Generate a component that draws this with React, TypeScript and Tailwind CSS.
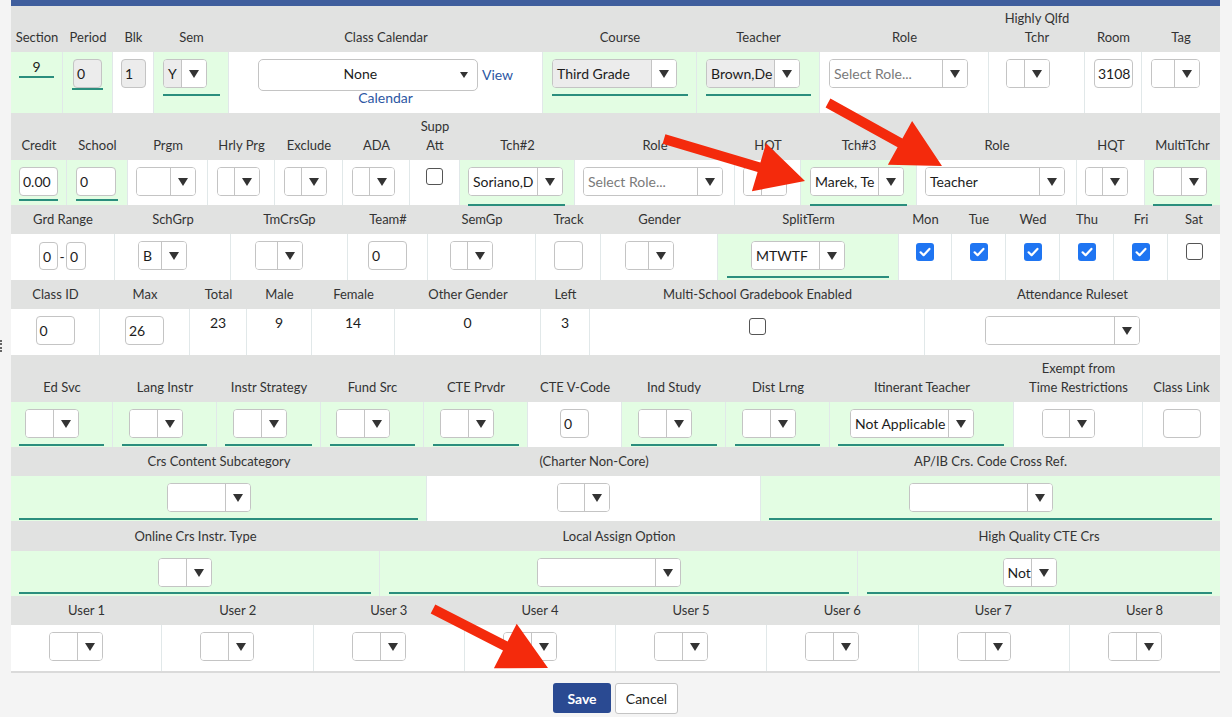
import React from "react";

const GREEN = "bg-[#e3fde3]";
const UL = "border-b-2 border-[#2b8e7d]";

function Tri({ small }: { small?: boolean }) {
  return small ? (
    <svg width="8" height="6" viewBox="0 0 8 6">
      <polygon points="0,0 8,0 4,6" fill="#333" />
    </svg>
  ) : (
    <svg width="10" height="8" viewBox="0 0 10 8">
      <polygon points="0,0 10,0 5,8" fill="#333" />
    </svg>
  );
}

type SelProps = { w: string; text?: string; ph?: boolean; gray?: boolean };
function Sel({ w, text = "", ph, gray }: SelProps) {
  return (
    <div className={`${w} flex h-[29px] shrink-0 overflow-hidden rounded-[4px] border border-[#c4c4c4] bg-white`}>
      <div
        className={`flex min-w-0 flex-1 items-center overflow-hidden whitespace-nowrap pb-[1px] pl-[4px] text-[14px] ${
          gray ? "bg-[#ececec]" : "bg-white"
        } ${ph ? "text-[#7a7a7a]" : "text-[#1c1c1c]"}`}
      >
        {text}
      </div>
      <div className="flex w-[25px] shrink-0 items-center justify-center border-l border-[#c4c4c4] bg-white">
        <Tri />
      </div>
    </div>
  );
}

function Inp({ w, v = "", gray }: { w: string; v?: string; gray?: boolean }) {
  return (
    <div
      className={`${w} flex h-[29px] shrink-0 items-center overflow-hidden rounded-[4px] border border-[#c4c4c4] pb-[1px] pl-[3px] text-[14px] text-[#1c1c1c] ${
        gray ? "bg-[#ececec]" : "bg-white"
      }`}
    >
      {v}
    </div>
  );
}

function Cb({ on }: { on?: boolean }) {
  return on ? (
    <div className="flex h-[18px] w-[18px] items-center justify-center rounded-[3px] bg-[#1f75f2]">
      <svg width="12" height="10" viewBox="0 0 12 10">
        <path d="M1.6 5.3 L4.6 8.2 L10.4 1.9" stroke="white" strokeWidth="2.2" fill="none" strokeLinecap="round" strokeLinejoin="round" />
      </svg>
    </div>
  ) : (
    <div className="h-[17px] w-[17px] rounded-[3px] border border-[#555] bg-white" />
  );
}

function C({
  w,
  g,
  last,
  className = "",
  children,
}: {
  w: string;
  g?: boolean;
  last?: boolean;
  className?: string;
  children?: React.ReactNode;
}) {
  return (
    <div className={`${w} shrink-0 ${g ? GREEN : "bg-white"} ${last ? "" : "border-r border-[#e1e8e9]"} ${className}`}>
      {children}
    </div>
  );
}

function HRow({ h, cols }: { h: string; cols: [string, React.ReactNode][] }) {
  return (
    <div className={`flex ${h} bg-[#e1e2e1]`}>
      {cols.map(([w, label], i) => (
        <div
          key={i}
          className={`${w} flex shrink-0 items-end justify-center pb-[5px] text-center text-[13px] leading-[19px] text-[#333]`}
        >
          {label}
        </div>
      ))}
    </div>
  );
}

const Sp = () => <div className="w-[20px] shrink-0" />;

function arrowPts(x1: number, y1: number, x2: number, y2: number, s = 10, W = 50, L = 48) {
  const dx = x2 - x1;
  const dy = y2 - y1;
  const len = Math.hypot(dx, dy);
  const ux = dx / len;
  const uy = dy / len;
  const nx = -uy;
  const ny = ux;
  const bx = x2 - ux * L;
  const by = y2 - uy * L;
  const p = [
    [x1 + (nx * s) / 2, y1 + (ny * s) / 2],
    [bx + (nx * s) / 2, by + (ny * s) / 2],
    [bx + (nx * W) / 2, by + (ny * W) / 2],
    [x2, y2],
    [bx - (nx * W) / 2, by - (ny * W) / 2],
    [bx - (nx * s) / 2, by - (ny * s) / 2],
    [x1 - (nx * s) / 2, y1 - (ny * s) / 2],
  ];
  return p.map((q) => q.map((n) => n.toFixed(1)).join(",")).join(" ");
}

export default function App() {
  return (
    <div className="relative min-h-screen w-full overflow-hidden bg-[#f4f4f4] font-[Lato,sans-serif] text-[#1c1c1c]">
      <div className="ml-[11px] w-[1209px]">
        <div className="h-[6px] bg-[#3f5e9d]" />

        {/* Row 1 */}
        <HRow
          h="h-[46px]"
          cols={[
            ["w-[52px]", "Section"],
            ["w-[50px]", "Period"],
            ["w-[41px]", "Blk"],
            ["w-[75px]", "Sem"],
            ["w-[314px]", "Class Calendar"],
            ["w-[154px]", "Course"],
            ["w-[123px]", "Teacher"],
            ["w-[169px]", "Role"],
            [
              "w-[96px]",
              <span>
                Highly Qlfd
                <br />
                Tchr
              </span>,
            ],
            ["w-[57px]", "Room"],
            ["w-[78px]", "Tag"],
          ]}
        />
        <div className="flex h-[61px]">
          <C w="w-[52px]" g>
            <div className={`mx-[8px] mt-[6px] ${UL} text-center text-[14px] leading-[18px]`}>9</div>
          </C>
          <C w="w-[50px]" g className="pt-[7px]">
            <div className={`mx-[9px] ${UL}`}>
              <div className="ml-[1px]">
                <Inp w="w-[29px]" v="0" gray />
              </div>
            </div>
          </C>
          <C w="w-[41px]" className="pl-[8px] pt-[7px]">
            <Inp w="w-[25px]" v="1" gray />
          </C>
          <C w="w-[75px]" g className="pt-[7px]">
            <div className={`ml-[9px] mr-[8px] ${UL} pb-[6px]`}>
              <Sel w="w-[44px]" text="Y" gray />
            </div>
          </C>
          <C w="w-[314px]" className="flex flex-col items-center pt-[7px]">
            <div className="flex items-center gap-[4px]">
              <div className="flex h-[32px] w-[220px] items-center rounded-[5px] border border-[#c4c4c4] bg-white pb-[3px]">
                <div className="flex-1 pl-[2px] text-center text-[14px]">None</div>
                <div className="flex pr-[9px] pt-[2px]">
                  <Tri small />
                </div>
              </div>
              <span className="pb-[2px] text-[14px] text-[#2c57a3]">View</span>
            </div>
            <span className="-mt-[1px] text-[14px] leading-[16px] text-[#2c57a3]">Calendar</span>
          </C>
          <C w="w-[154px]" g className="pt-[7px]">
            <div className={`ml-[9px] mr-[8px] ${UL} pb-[6px]`}>
              <Sel w="w-[125px]" text="Third Grade" gray />
            </div>
          </C>
          <C w="w-[123px]" g className="pt-[7px]">
            <div className={`ml-[9px] mr-[8px] ${UL} pb-[6px]`}>
              <Sel w="w-[94px]" text="Brown,De" gray />
            </div>
          </C>
          <C w="w-[169px]" className="pl-[9px] pt-[7px]">
            <Sel w="w-[139px]" text="Select Role..." ph />
          </C>
          <C w="w-[96px]" className="pl-[17px] pt-[7px]">
            <Sel w="w-[44px]" />
          </C>
          <C w="w-[57px]" className="pl-[9px] pt-[7px]">
            <Inp w="w-[39px]" v="3108" />
          </C>
          <C w="w-[78px]" last className="pl-[9px] pt-[7px]">
            <Sel w="w-[49px]" />
          </C>
        </div>

        {/* Row 2 */}
        <HRow
          h="h-[47px]"
          cols={[
            ["w-[56px]", "Credit"],
            ["w-[61px]", "School"],
            ["w-[80px]", "Prgm"],
            ["w-[67px]", "Hrly Prg"],
            ["w-[68px]", "Exclude"],
            ["w-[67px]", "ADA"],
            [
              "w-[50px]",
              <span>
                Supp
                <br />
                Att
              </span>,
            ],
            ["w-[115px]", "Tch#2"],
            ["w-[160px]", "Role"],
            ["w-[66px]", "HQT"],
            ["w-[116px]", "Tch#3"],
            ["w-[160px]", "Role"],
            ["w-[68px]", "HQT"],
            ["w-[75px]", "MultiTchr"],
          ]}
        />
        <div className="flex h-[45px]">
          <C w="w-[56px]" g className="pt-[7px]">
            <div className={`mx-[8px] ${UL} pb-[3px]`}>
              <Inp w="w-[39px]" v="0.00" />
            </div>
          </C>
          <C w="w-[61px]" g className="pt-[7px]">
            <div className={`ml-[9px] mr-[9px] ${UL} pb-[3px]`}>
              <Inp w="w-[40px]" v="0" />
            </div>
          </C>
          <C w="w-[80px]" className="pl-[8px] pt-[7px]">
            <Sel w="w-[60px]" />
          </C>
          <C w="w-[67px]" className="pl-[9px] pt-[7px]">
            <Sel w="w-[43px]" />
          </C>
          <C w="w-[68px]" className="pl-[9px] pt-[7px]">
            <Sel w="w-[43px]" />
          </C>
          <C w="w-[67px]" className="pl-[9px] pt-[7px]">
            <Sel w="w-[43px]" />
          </C>
          <C w="w-[50px]" className="pl-[16px] pt-[8px]">
            <Cb />
          </C>
          <C w="w-[115px]" g className="pt-[7px]">
            <div className={`ml-[8px] mr-[9px] ${UL} pb-[8px]`}>
              <Sel w="w-[95px]" text="Soriano,D" />
            </div>
          </C>
          <C w="w-[160px]" className="pl-[8px] pt-[7px]">
            <Sel w="w-[140px]" text="Select Role..." ph />
          </C>
          <C w="w-[66px]" className="pl-[8px] pt-[7px]">
            <Sel w="w-[44px]" />
          </C>
          <C w="w-[116px]" g className="pt-[7px]">
            <div className={`mx-[9px] ${UL} pb-[8px]`}>
              <Sel w="w-[94px]" text="Marek, Te" />
            </div>
          </C>
          <C w="w-[160px]" className="pl-[8px] pt-[7px]">
            <Sel w="w-[140px]" text="Teacher" />
          </C>
          <C w="w-[68px]" className="pl-[8px] pt-[7px]">
            <Sel w="w-[43px]" />
          </C>
          <C w="w-[75px]" g last className="pt-[7px]">
            <div className={`mx-[8px] ${UL} pb-[8px]`}>
              <Sel w="w-[54px]" />
            </div>
          </C>
        </div>

        {/* Row 3 */}
        <HRow
          h="h-[29px]"
          cols={[
            ["w-[104px]", "Grd Range"],
            ["w-[116px]", "SchGrp"],
            ["w-[117px]", "TmCrsGp"],
            ["w-[80px]", "Team#"],
            ["w-[108px]", "SemGp"],
            ["w-[65px]", "Track"],
            ["w-[117px]", "Gender"],
            ["w-[181px]", "SplitTerm"],
            ["w-[53px]", "Mon"],
            ["w-[54px]", "Tue"],
            ["w-[54px]", "Wed"],
            ["w-[54px]", "Thu"],
            ["w-[54px]", "Fri"],
            ["w-[52px]", "Sat"],
          ]}
        />
        <div className="flex h-[46px]">
          <C w="w-[104px]" className="flex justify-center pt-[8px]">
            <div className="flex h-[28px] items-center">
              <div className="flex h-[28px] w-[19px] items-center rounded-[4px] border border-[#c4c4c4] pl-[3px] text-[14px]">0</div>
              <span className="w-[8px] text-center text-[14px]">-</span>
              <div className="flex h-[28px] w-[20px] items-center rounded-[4px] border border-[#c4c4c4] pl-[3px] text-[14px]">0</div>
            </div>
          </C>
          <C w="w-[116px]" className="flex justify-center pt-[7px]">
            <Sel w="w-[49px]" text="B" />
            <Sp />
          </C>
          <C w="w-[117px]" className="flex justify-center pt-[7px]">
            <Sel w="w-[48px]" />
            <Sp />
          </C>
          <C w="w-[80px]" className="flex justify-center pt-[7px]">
            <Inp w="w-[39px]" v="0" />
          </C>
          <C w="w-[108px]" className="flex justify-center pt-[7px]">
            <Sel w="w-[43px]" />
            <Sp />
          </C>
          <C w="w-[65px]" className="flex justify-center pt-[7px]">
            <Inp w="w-[29px]" />
          </C>
          <C w="w-[117px]" className="flex justify-center pt-[7px]">
            <Sel w="w-[49px]" />
            <Sp />
          </C>
          <C w="w-[181px]" g className="pt-[7px]">
            <div className={`mx-[9px] flex justify-center ${UL} pb-[6px]`}>
              <Sel w="w-[94px]" text="MTWTF" />
              <Sp />
            </div>
          </C>
          <C w="w-[53px]" className="flex justify-center pt-[9px]">
            <Cb on />
          </C>
          <C w="w-[54px]" className="flex justify-center pt-[9px]">
            <Cb on />
          </C>
          <C w="w-[54px]" className="flex justify-center pt-[9px]">
            <Cb on />
          </C>
          <C w="w-[54px]" className="flex justify-center pt-[9px]">
            <Cb on />
          </C>
          <C w="w-[54px]" className="flex justify-center pt-[9px]">
            <Cb on />
          </C>
          <C w="w-[52px]" last className="flex justify-center pt-[9px]">
            <Cb />
          </C>
        </div>

        {/* Row 4 */}
        <HRow
          h="h-[29px]"
          cols={[
            ["w-[89px]", "Class ID"],
            ["w-[90px]", "Max"],
            ["w-[57px]", "Total"],
            ["w-[65px]", "Male"],
            ["w-[83px]", "Female"],
            ["w-[146px]", "Other Gender"],
            ["w-[49px]", "Left"],
            ["w-[335px]", "Multi-School Gradebook Enabled"],
            ["w-[295px]", "Attendance Ruleset"],
          ]}
        />
        <div className="flex h-[46px]">
          <C w="w-[89px]" className="flex justify-center pt-[7px]">
            <Inp w="w-[39px]" v="0" />
          </C>
          <C w="w-[90px]" className="flex justify-center pt-[7px]">
            <Inp w="w-[39px]" v="26" />
          </C>
          <C w="w-[57px]" className="pt-[5px] text-center text-[14px] leading-[18px]">
            23
          </C>
          <C w="w-[65px]" className="pt-[5px] text-center text-[14px] leading-[18px]">
            9
          </C>
          <C w="w-[83px]" className="pt-[5px] text-center text-[14px] leading-[18px]">
            14
          </C>
          <C w="w-[146px]" className="pt-[5px] text-center text-[14px] leading-[18px]">
            0
          </C>
          <C w="w-[49px]" className="pt-[5px] text-center text-[14px] leading-[18px]">
            3
          </C>
          <C w="w-[335px]" className="flex justify-center pt-[9px]">
            <Cb />
          </C>
          <C w="w-[295px]" last className="flex justify-center pt-[7px]">
            <Sel w="w-[155px]" />
            <Sp />
          </C>
        </div>

        {/* Row 5 */}
        <HRow
          h="h-[47px]"
          cols={[
            ["w-[102px]", "Ed Svc"],
            ["w-[104px]", "Lang Instr"],
            ["w-[104px]", "Instr Strategy"],
            ["w-[103px]", "Fund Src"],
            ["w-[104px]", "CTE Prvdr"],
            ["w-[94px]", "CTE V-Code"],
            ["w-[104px]", "Ind Study"],
            ["w-[104px]", "Dist Lrng"],
            ["w-[184px]", "Itinerant Teacher"],
            [
              "w-[129px]",
              <span>
                Exempt from
                <br />
                Time Restrictions
              </span>,
            ],
            ["w-[77px]", "Class Link"],
          ]}
        />
        <div className="flex h-[45px]">
          <C w="w-[102px]" g className="pt-[7px]">
            <div className={`mx-[8px] ${UL} pb-[6px] pl-[6px]`}>
              <Sel w="w-[54px]" />
            </div>
          </C>
          <C w="w-[104px]" g className="pt-[7px]">
            <div className={`mx-[9px] ${UL} pb-[6px] pl-[7px]`}>
              <Sel w="w-[54px]" />
            </div>
          </C>
          <C w="w-[104px]" g className="pt-[7px]">
            <div className={`mx-[8px] ${UL} pb-[6px] pl-[8px]`}>
              <Sel w="w-[54px]" />
            </div>
          </C>
          <C w="w-[103px]" g className="pt-[7px]">
            <div className={`ml-[9px] mr-[8px] ${UL} pb-[6px] pl-[6px]`}>
              <Sel w="w-[54px]" />
            </div>
          </C>
          <C w="w-[104px]" g className="pt-[7px]">
            <div className={`ml-[9px] mr-[8px] ${UL} pb-[6px] pl-[7px]`}>
              <Sel w="w-[54px]" />
            </div>
          </C>
          <C w="w-[94px]" className="flex justify-center pt-[7px]">
            <Inp w="w-[29px]" v="0" />
          </C>
          <C w="w-[104px]" g className="pt-[7px]">
            <div className={`ml-[9px] mr-[8px] ${UL} pb-[6px] pl-[7px]`}>
              <Sel w="w-[54px]" />
            </div>
          </C>
          <C w="w-[104px]" g className="pt-[7px]">
            <div className={`mx-[9px] ${UL} pb-[6px] pl-[7px]`}>
              <Sel w="w-[54px]" />
            </div>
          </C>
          <C w="w-[184px]" g className="pt-[7px]">
            <div className={`ml-[8px] mr-[9px] ${UL} pb-[6px] pl-[12px]`}>
              <Sel w="w-[124px]" text="Not Applicable" />
            </div>
          </C>
          <C w="w-[129px]" className="flex justify-center pt-[7px]">
            <Sel w="w-[53px]" />
            <Sp />
          </C>
          <C w="w-[77px]" last className="flex justify-center pt-[7px]">
            <Inp w="w-[38px]" />
          </C>
        </div>

        {/* Row 6 */}
        <HRow
          h="h-[29px]"
          cols={[
            ["w-[416px]", "Crs Content Subcategory"],
            ["w-[334px]", "(Charter Non-Core)"],
            ["w-[459px]", "AP/IB Crs. Code Cross Ref."],
          ]}
        />
        <div className="flex h-[45px]">
          <C w="w-[416px]" g className="pt-[7px]">
            <div className={`mx-[8px] flex justify-center ${UL} pb-[6px]`}>
              <Sel w="w-[84px]" />
              <Sp />
            </div>
          </C>
          <C w="w-[334px]" className="flex justify-center pt-[7px]">
            <Sel w="w-[53px]" />
            <Sp />
          </C>
          <C w="w-[459px]" g last className="pt-[7px]">
            <div className={`mx-[8px] flex justify-center ${UL} pb-[6px]`}>
              <Sel w="w-[144px]" />
              <Sp />
            </div>
          </C>
        </div>

        {/* Row 7 */}
        <HRow
          h="h-[30px]"
          cols={[
            ["w-[369px]", "Online Crs Instr. Type"],
            ["w-[478px]", "Local Assign Option"],
            ["w-[362px]", "High Quality CTE Crs"],
          ]}
        />
        <div className="flex h-[45px]">
          <C w="w-[369px]" g className="pt-[7px]">
            <div className={`mx-[8px] flex justify-center ${UL} pb-[5px]`}>
              <Sel w="w-[54px]" />
              <Sp />
            </div>
          </C>
          <C w="w-[478px]" g className="pt-[7px]">
            <div className={`ml-[9px] mr-[8px] flex justify-center ${UL} pb-[5px]`}>
              <Sel w="w-[144px]" />
              <Sp />
            </div>
          </C>
          <C w="w-[362px]" g last className="pt-[7px]">
            <div className={`ml-[9px] mr-[8px] flex justify-center ${UL} pb-[5px]`}>
              <Sel w="w-[54px]" text="Not" />
              <Sp />
            </div>
          </C>
        </div>

        {/* Row 8 */}
        <HRow
          h="h-[29px]"
          cols={[
            ["flex-1", "User 1"],
            ["flex-1", "User 2"],
            ["flex-1", "User 3"],
            ["flex-1", "User 4"],
            ["flex-1", "User 5"],
            ["flex-1", "User 6"],
            ["flex-1", "User 7"],
            ["flex-1", "User 8"],
          ]}
        />
        <div className="flex h-[46px]">
          {[0, 1, 2, 3, 4, 5, 6, 7].map((i) => (
            <C key={i} w="flex-1 basis-0" last={i === 7} className="flex justify-center pt-[7px]">
              <Sel w="w-[54px]" />
              <Sp />
            </C>
          ))}
        </div>
        <div className="h-[2px] bg-[#dadada]" />

        <div className="flex justify-center gap-[4px] pt-[10px]">
          <button className="h-[30px] w-[58px] rounded-[3px] bg-[#2a4a92] text-[14px] font-bold text-white">Save</button>
          <button className="h-[31px] w-[63px] rounded-[3px] border border-[#c4c4c4] bg-white text-[14px] text-[#222]">
            Cancel
          </button>
        </div>
      </div>

      <div className="absolute left-0 top-[340px] h-[12px] w-[2px] border-l-2 border-dotted border-[#666]" />

      <svg className="pointer-events-none absolute left-0 top-0" width="1232" height="717">
        <polygon points={arrowPts(664, 139, 805, 181)} fill="#f42a0c" />
        <polygon points={arrowPts(828, 103, 942, 166)} fill="#f42a0c" />
        <polygon points={arrowPts(433, 609, 548, 668)} fill="#f42a0c" />
      </svg>
    </div>
  );
}
